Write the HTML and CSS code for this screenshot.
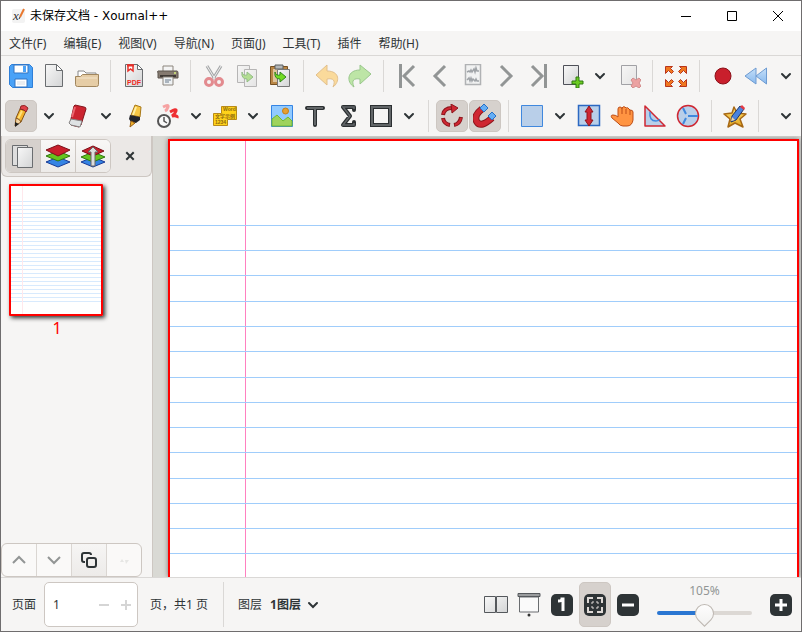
FILE: index.html
```html
<!DOCTYPE html>
<html lang="zh-CN">
<head>
    <meta charset="UTF-8">
    <meta name="viewport" content="width=device-width, initial-scale=1.0">
    <title>未保存文档 - Xournal++</title>
    <link rel="stylesheet" href="styles.css">
</head>
<body>
    <!-- shared shapes -->
    <svg class="defs" aria-hidden="true">
        <defs>
            <linearGradient id="paper" x1="0" y1="0" x2="1" y2="1">
                <stop offset="0" stop-color="#f8f8f8"/><stop offset="1" stop-color="#d3d4d5"/>
            </linearGradient>
            <linearGradient id="gold" x1="0" y1="0" x2="0" y2="1">
                <stop offset="0" stop-color="#ffdf70"/><stop offset="1" stop-color="#e2a51f"/>
            </linearGradient>
            <linearGradient id="blue" x1="0" y1="0" x2="0" y2="1">
                <stop offset="0" stop-color="#c5dff8"/><stop offset="1" stop-color="#88b9ee"/>
            </linearGradient>
        </defs>
        <symbol id="chevron" viewBox="0 0 12 12">
            <path d="M2 4l4 4 4-4" fill="none" stroke="#2e3436" stroke-width="2" stroke-linecap="round"/>
        </symbol>
    </svg>

    <div class="window">
        <header class="titlebar">
            <svg class="app-icon" viewBox="0 0 16 16">
                <rect width="13" height="14" y="1" rx="2" fill="#f3f3f3"/>
                <text x="1" y="12" font-family="Liberation Serif" font-size="13" font-style="italic" fill="#333">x</text>
                <path d="M8 9L12 1" stroke="#e8772e" stroke-width="2"/>
                <path d="M8 9l-1 2" stroke="#333"/>
            </svg>
            <h1 class="title">未保存文档 - Xournal++</h1>
            <button class="win-button" aria-label="最小化"><svg viewBox="0 0 12 12"><path d="M1 6.500h10" stroke="#000"/></svg></button>
            <button class="win-button" aria-label="最大化"><svg viewBox="0 0 12 12"><path d="M1.500 1.500h9v9h-9z" fill="none" stroke="#000"/></svg></button>
            <button class="win-button" aria-label="关闭"><svg viewBox="0 0 12 12"><path d="M1 1l10 10M11 1L1 11" stroke="#000"/></svg></button>
        </header>

        <nav class="menubar">
            <a href="#">文件(F)</a>
            <a href="#">编辑(E)</a>
            <a href="#">视图(V)</a>
            <a href="#">导航(N)</a>
            <a href="#">页面(J)</a>
            <a href="#">工具(T)</a>
            <a href="#">插件</a>
            <a href="#">帮助(H)</a>
        </nav>

        <div class="toolbar">
            <button class="tool" aria-label="保存"><svg viewBox="0 0 24 24">
                <path d="M2.500.5h18l3 3v20h-20l-3-3v-18z" fill="#4aa2f7" stroke="#2f7fd8"/>
                <path d="M5 1h14v8H5z" fill="#fff" stroke="#3274c2"/><path d="M14 2h3v6h-3z" fill="#4aa2f7"/>
                <path d="M6 15h12v8H6z" fill="#fff" stroke="#3274c2"/><path d="M8 18h8M8 20h8" stroke="#d5dbe2"/>
            </svg></button>
            <button class="tool" aria-label="新建"><svg viewBox="0 0 24 24">
                <path d="M3.500.5h11l6 6v16h-17z" fill="url(#paper)" stroke="#6a6d70"/>
                <path d="M14.500.5v6h6z" fill="#fff" stroke="#6a6d70"/>
            </svg></button>
            <button class="tool" aria-label="打开"><svg viewBox="0 0 24 24">
                <path d="M3 11V7h6l2 2h10v5H3z" fill="#fff" stroke="#888"/>
                <path d="M.5 12.500h5l2-2h16v10q0 2-2 2h-19q-2 0-2-2z" fill="#e6cda6" stroke="#a1865d"/>
                <path d="M2 14h20" stroke="#f4e5cc"/>
            </svg></button>
            <span class="sep"></span>
            <button class="tool" aria-label="导出 PDF"><svg viewBox="0 0 24 24">
                <path d="M3.500.5h12l5 5v17h-17z" fill="url(#paper)" stroke="#6a6d70"/>
                <path d="M15.500.5v5h5z" fill="#fff" stroke="#6a6d70"/>
                <path d="M6 1h5v6L8.500 5 6 7z" fill="#fff" stroke="#e8302a" stroke-width="1.500"/>
                <path d="M5 1.500h7" stroke="#e8302a" stroke-width="2"/>
                <text x="5" y="21" font-family="Liberation Sans" font-size="7" font-weight="bold" fill="#f02a24">PDF</text>
            </svg></button>
            <button class="tool" aria-label="打印"><svg viewBox="0 0 24 24">
                <path d="M8 2h10v6H8z" fill="#f4f4f4" stroke="#8c857d"/>
                <path d="M3 7h19q1 0 1 2v5H3V9q-1-2 0-2z" fill="#857a70" stroke="#5d544c"/>
                <path d="M5 12h16" stroke="#403a35" stroke-width="2"/>
                <path d="M8 13h10v8H8z" fill="#eef1f3" stroke="#8c857d"/><path d="M10 16h6M10 18h4" stroke="#68798a"/>
                <circle cx="20" cy="9" r="1" fill="#d5f07a"/>
            </svg></button>
            <span class="sep"></span>
            <button class="tool dim" aria-label="剪切"><svg viewBox="0 0 24 24">
                <path d="M5 2l8 13M19 2l-8 13" stroke="#555a5e" stroke-width="3"/>
                <path d="M5 2l8 13M19 2l-8 13" stroke="#e8e8e8"/>
                <ellipse cx="7" cy="18" rx="3.500" ry="3.500" fill="none" stroke="#d1232d" stroke-width="3"/>
                <ellipse cx="17" cy="18" rx="3.500" ry="3.500" fill="none" stroke="#d1232d" stroke-width="3"/>
            </svg></button>
            <button class="tool dim" aria-label="复制"><svg viewBox="0 0 24 24">
                <path d="M2.500 1.500h12v17h-12z" fill="url(#paper)" stroke="#777"/>
                <path d="M9.500 5.500h12v17h-12z" fill="url(#paper)" stroke="#777"/>
                <path d="M7 8q1 4 5 3V8l6 5-6 5v-3q-6 0-5-7z" fill="#72c832" stroke="#32851c"/>
            </svg></button>
            <button class="tool" aria-label="粘贴"><svg viewBox="0 0 24 24">
                <path d="M2.500 2.500h17v18h-17z" fill="#b98645" stroke="#775123"/>
                <path d="M5 5h11v13H5z" fill="#dfc49c"/>
                <path d="M7 1h8v4H7z" fill="#b4b7b8" stroke="#5b5e60"/>
                <path d="M9.500 5.500h12v17h-12z" fill="url(#paper)" stroke="#777"/>
                <path d="M7 8q1 4 5 3V8l6 5-6 5v-3q-6 0-5-7z" fill="#72dc22" stroke="#32851c"/>
            </svg></button>
            <span class="sep"></span>
            <button class="tool dim" aria-label="撤销"><svg viewBox="0 0 24 24">
                <path d="M1 11L12 1v6c13 0 13 11 6 16 3-7 0-9-6-8v6z" fill="#ffc044" stroke="#cf8b27"/>
            </svg></button>
            <button class="tool dim" aria-label="重做"><svg viewBox="0 0 24 24">
                <path d="M23 10L12 1v5C-1 6-2 18 6 23c-3-7 0-9 6-8v5z" fill="#86d65a" stroke="#3f9a26"/>
            </svg></button>
            <span class="sep"></span>
            <button class="tool nav" aria-label="第一页"><svg viewBox="0 0 24 24"><path d="M5.500 0v24M19 2L9 12l10 10"/></svg></button>
            <button class="tool nav" aria-label="上一页"><svg viewBox="0 0 24 24"><path d="M17 2L7 12l10 10"/></svg></button>
            <button class="tool dim" aria-label="跳转到注释页"><svg viewBox="0 0 24 24">
                <path d="M4.500.5h15v20h-15z" fill="#eef0f2" stroke="#6d7276" stroke-width="1.500"/>
                <path d="M6 8l2-1 1 1 1-2 1 2 2-3 1 3 1-4 1 3h2M6 16l2-2 1 3 1-3 1 3 1-2 2 2 1-2 1 2h2" fill="none" stroke="#4a535c" stroke-width="1.500"/>
            </svg></button>
            <button class="tool nav" aria-label="下一页"><svg viewBox="0 0 24 24"><path d="M7 2l10 10L7 22"/></svg></button>
            <button class="tool nav" aria-label="最后一页"><svg viewBox="0 0 24 24"><path d="M18.500 0v24M5 2l10 10L5 22"/></svg></button>
            <button class="tool" aria-label="添加页面"><svg viewBox="0 0 24 24">
                <path d="M3.500 1.500h15v19h-15z" fill="url(#paper)" stroke="#4e5058"/>
                <path d="M16 13h3v4h4v3h-4v4h-3v-4h-4v-3h4z" fill="#6ccb22" stroke="#2f7a10"/>
            </svg></button>
            <button class="arrow" aria-label="页面类型"><svg><use href="#chevron"/></svg></button>
            <button class="tool dim" aria-label="删除页面"><svg viewBox="0 0 24 24">
                <path d="M4.500 1.500h15v19h-15z" fill="url(#paper)" stroke="#4e5058"/>
                <path d="M14 16l2-2 3 2 3-2 2 2-2 3 2 3-2 2-3-2-3 2-2-2 2-3z" fill="#e35252" stroke="#b12828"/>
            </svg></button>
            <span class="sep"></span>
            <button class="tool" aria-label="全屏"><svg viewBox="0 0 24 24">
                <g fill="#f0781f" stroke="#b8341c">
                    <path id="corner" d="M1.500 2.500h7l-2 2 3 3-2 2-3-3-3 3z"/>
                    <use href="#corner" transform="matrix(-1 0 0 1 24 0)"/>
                    <use href="#corner" transform="matrix(1 0 0 -1 0 25)"/>
                    <use href="#corner" transform="matrix(-1 0 0 -1 24 25)"/>
                </g>
            </svg></button>
            <span class="sep"></span>
            <button class="tool" aria-label="录音"><svg viewBox="0 0 24 24"><circle cx="12" cy="12" r="8" fill="#c91f2c" stroke="#8b1018"/></svg></button>
            <button class="tool" aria-label="后退"><svg viewBox="0 0 24 24">
                <path d="M12 4v16L1 12zM22.500 4v16L12 12z" fill="url(#blue)" stroke="#6e9bd1" stroke-linejoin="round"/>
            </svg></button>
            <button class="arrow overflow" aria-label="更多"><svg><use href="#chevron"/></svg></button>
        </div>

        <div class="toolbar">
            <button class="tool active" aria-label="画笔"><svg viewBox="0 0 24 24">
                <path d="M7 14l4-9 6 2-5 11z" fill="#f5b52c" stroke="#825116"/>
                <path d="M13 7L9 15" stroke="#ffe07a" stroke-width="2"/>
                <path d="M11 5l1-3q4-2 7 2l-2 4q-2-3-6-3z" fill="#e04048" stroke="#8d2424"/>
                <path d="M7 14l-1 8 6-4q-1-3-5-4z" fill="#f3d5a4" stroke="#825116"/><path d="M6 18v5l4-3z" fill="#222"/>
            </svg></button>
            <button class="arrow" aria-label="画笔选项"><svg><use href="#chevron"/></svg></button>
            <button class="tool" aria-label="橡皮擦"><svg viewBox="0 0 24 24">
                <path d="M9 1l9 2q2 0 2 2l-5 16-2 2-8-2-1-2L8 2z" fill="#cc2430" stroke="#82151c"/>
                <path d="M5 15l11 2-2 6-9-2-2-2z" fill="#dfe2e4" stroke="#858585"/>
                <path d="M9 3L6 13" stroke="#ed6670" stroke-width="2"/>
            </svg></button>
            <button class="arrow" aria-label="橡皮擦选项"><svg><use href="#chevron"/></svg></button>
            <button class="tool" aria-label="荧光笔"><svg viewBox="0 0 24 24">
                <path d="M12 1l6 2-1 10-9-2z" fill="#f7c745" stroke="#a87818"/>
                <path d="M13 3l-3 8" stroke="#fff0a5" stroke-width="2"/>
                <path d="M7 11l10 2v3l-4 3-5-1-2-3z" fill="#22242b"/>
                <path d="M8 17l4 2-5 4z" fill="#f5b52c" stroke="#945d16"/>
            </svg></button>
            <button class="tool" aria-label="激光笔"><svg viewBox="0 0 24 24">
                <path d="M7 3q6-3 5 0t-3 4" fill="none" stroke="#f6a2a2" stroke-width="3"/>
                <path d="M14 8q7-4 6-1t-4 5q6-1 5 2" fill="none" stroke="#ee2f32" stroke-width="3"/>
                <circle cx="8" cy="17" r="6" fill="#fafafa" stroke="#555" stroke-width="2"/>
                <path d="M8 13v4l3 2" fill="none" stroke="#555" stroke-width="1.500"/>
            </svg></button>
            <button class="arrow" aria-label="激光笔选项"><svg><use href="#chevron"/></svg></button>
            <button class="tool" aria-label="选择 PDF 文本"><svg viewBox="0 0 24 24">
                <path d="M8.500 2.500h15v13h-9v6h-14v-12h8z" fill="#ffd21a" stroke="#b98b19"/>
                <g font-family="Liberation Sans" font-size="5" font-weight="bold" fill="#8e6910">
                    <text x="10" y="7">Word</text>
                    <text x="2" y="14" font-family="Noto Sans CJK SC">文字示例</text>
                    <text x="2" y="20">1234</text>
                </g>
            </svg></button>
            <button class="arrow" aria-label="文本选项"><svg><use href="#chevron"/></svg></button>
            <button class="tool" aria-label="图片"><svg viewBox="0 0 24 24">
                <path d="M1.500 1.500h21v21h-21z" fill="#91caff" stroke="#3584e4"/>
                <path d="M2 15l5-4 6 6 5-4 4 4v5H2z" fill="#9ed35c" stroke="#72b932"/>
                <circle cx="15.500" cy="7" r="3" fill="#e6a031" stroke="#c77d17"/>
            </svg></button>
            <button class="tool" aria-label="文本"><svg viewBox="0 0 24 24">
                <path d="M4 4h16M12 4v17" fill="none" stroke="#2b2f31" stroke-width="4" stroke-linecap="round"/>
                <path d="M4 4h16M12 4v17" fill="none" stroke="#626668" stroke-width="2"/>
            </svg></button>
            <button class="tool" aria-label="公式"><svg viewBox="0 0 24 24">
                <path d="M18 6V3H7l7 9-7 9h11v-3" fill="none" stroke="#2b2f31" stroke-width="4" stroke-linejoin="round" stroke-linecap="round"/>
                <path d="M18 5V3H7l7 9-7 9h11v-2" fill="none" stroke="#626668" stroke-width="1.500"/>
            </svg></button>
            <button class="tool" aria-label="形状"><svg viewBox="0 0 24 24">
                <path d="M3 3h18v18H3z" fill="#f6f5f4" stroke="#2b2f31" stroke-width="4"/>
                <path d="M3 3h18v18H3z" fill="none" stroke="#626668" stroke-width="2"/>
            </svg></button>
            <button class="arrow" aria-label="形状选项"><svg><use href="#chevron"/></svg></button>
            <span class="sep"></span>
            <button class="tool active" aria-label="旋转吸附"><svg viewBox="0 0 24 24">
                <g fill="none" stroke="#8d151c" stroke-width="4">
                    <path d="M3 11q1-7 9-7M10 21q-6-1-7-7M14 21q6-1 7-8"/>
                    <path d="M3 10q2-6 9-6M9 21q-5-2-6-6M15 21q5-2 6-7" stroke="#cf2732" stroke-width="2"/>
                </g>
                <path d="M11 0l7 4-6 5z" fill="#cf2732" stroke="#8d151c"/>
            </svg></button>
            <button class="tool active" aria-label="网格吸附"><svg viewBox="0 0 24 24">
                <path d="M9 5Q0 12 4 18t15-4" fill="none" stroke="#8d151c" stroke-width="7"/>
                <path d="M9 5Q0 12 4 18t15-4" fill="none" stroke="#cf2732" stroke-width="5"/>
                <path d="M7 4l4-4 4 4-4 4zM15 12l4-4 4 4-4 4z" fill="#65aef5" stroke="#2870c4"/>
            </svg></button>
            <span class="sep"></span>
            <button class="tool" aria-label="选择矩形"><svg viewBox="0 0 24 24"><path d="M1.500 1.500h21v21h-21z" fill="#b9cfe9" stroke="#4088de"/></svg></button>
            <button class="arrow" aria-label="选择选项"><svg><use href="#chevron"/></svg></button>
            <button class="tool" aria-label="垂直间距"><svg viewBox="0 0 24 24">
                <path d="M1.500 1.500h21v20h-21z" fill="#b9cfe9" stroke="#2b68c2" stroke-width="1.500"/>
                <path d="M12 2l4 6h-2v8h2l-4 6-4-6h2V8H8z" fill="#cf2732" stroke="#8d151c"/>
            </svg></button>
            <button class="tool" aria-label="手形工具"><svg viewBox="0 0 24 24">
                <path d="M8 13V5q0-2 2-2t2 2V4q1-2 3-1l1 1q2-1 3 1l1 1q3 0 3 2v8q-1 6-6 6h-4q-3 0-5-3l-6-5q-2-3 1-3t5 2z" fill="#ff9442" stroke="#bd4d16"/>
                <path d="M12 5v5M16 5v5M20 6v5" stroke="#bd4d16"/>
            </svg></button>
            <button class="tool" aria-label="三角板"><svg viewBox="0 0 24 24">
                <path d="M2 2v20h20z" fill="#b9cfe9" stroke="#cf2732" stroke-width="1.500" stroke-linejoin="round"/>
                <path d="M7 8q-1 9 6 9 3 0 4-2" fill="none" stroke="#4088de" stroke-width="1.500"/>
            </svg></button>
            <button class="tool" aria-label="圆规"><svg viewBox="0 0 24 24">
                <circle cx="12" cy="12" r="10.500" fill="#b9cfe9" stroke="#cf2732" stroke-width="1.500"/>
                <path d="M7 4l3 6M7 20l3-6M12 12h10" stroke="#4088de" stroke-width="2"/>
            </svg></button>
            <span class="sep"></span>
            <button class="tool" aria-label="默认工具"><svg viewBox="0 0 24 24">
                <path d="M11 3l3 6 9 1-6 5 3 8-8-4-7 4 2-8-6-5 8-1z" fill="url(#gold)" stroke="#a76814" stroke-width="1.500" stroke-linejoin="round"/>
                <path d="M9 12L17 2l4 3-8 11-5 2z" fill="#4a83dd" stroke="#1f3667"/><path d="M17 3l2-2 3 3-1 2z" fill="#e43a45"/>
                <path d="M9 13l3 3-4 1z" fill="#f3d5a4"/>
            </svg></button>
            <span class="sep"></span>
            <button class="arrow overflow" aria-label="更多"><svg><use href="#chevron"/></svg></button>
        </div>

        <main class="workspace">
            <aside class="sidebar">
                <div class="sidebar-head">
                    <div class="tabs">
                        <button class="tab selected" aria-label="页面预览"><svg viewBox="0 0 24 24">
                            <path d="M1.500 1.500h15v20h-15z" fill="#dedede" stroke="#6a6d70"/>
                            <path d="M6.500 3.500h15v20h-15z" fill="url(#paper)" stroke="#6a6d70"/>
                        </svg></button>
                        <button class="tab" aria-label="图层堆栈"><svg viewBox="0 0 24 24">
                            <path d="M0 18l12-5 12 5-12 5z" fill="#3584e4" stroke="#1a3c96"/>
                            <path d="M0 12l12-5 12 5-12 5z" fill="#65c51e" stroke="#2f7a10"/>
                            <path d="M0 6l12-5 12 5-12 6z" fill="#c91f2c" stroke="#7c1018"/>
                        </svg></button>
                        <button class="tab" aria-label="图层"><svg viewBox="0 0 24 24">
                            <path d="M0 18l12-5 12 5-12 5z" fill="#3584e4" stroke="#1a3c96"/>
                            <path d="M0 13l12-5 12 5-12 5z" fill="#65c51e" stroke="#2f7a10"/>
                            <path d="M1 7l11-5 11 5-11 5z" fill="#c91f2c" stroke="#7c1018"/>
                            <path d="M12 3l5 5h-3v14h-4V8H7z" fill="#ddd" stroke="#666"/>
                        </svg></button>
                    </div>
                    <button class="close" aria-label="关闭侧栏"><svg viewBox="0 0 12 12"><path d="M3 3l6 6M9 3L3 9" stroke="#2e3436" stroke-width="2" stroke-linecap="square"/></svg></button>
                </div>
                <div class="previews">
                    <figure class="preview">
                        <div class="thumb"></div>
                        <figcaption>1</figcaption>
                    </figure>
                </div>
                <div class="page-actions">
                    <button aria-label="上移"><svg viewBox="0 0 16 16"><path d="M2 11l6-6 6 6" stroke="#929595"/></svg></button>
                    <button aria-label="下移"><svg viewBox="0 0 16 16"><path d="M2 5l6 6 6-6" stroke="#929595"/></svg></button>
                    <button class="enabled" aria-label="复制页面"><svg viewBox="0 0 16 16"><path d="M4 10H3q-2 0-2-2V3q0-2 2-2h5q2 0 2 2M8 6h5q2 0 2 2v5q0 2-2 2H8q-2 0-2-2V8q0-2 2-2z" stroke="#2e3436"/></svg></button>
                    <button aria-label="删除页面"><svg viewBox="0 0 16 16"><path d="M4 10l2-3 2 3zM9 8h4l-3 4z" fill="#e6e6e4"/></svg></button>
                </div>
            </aside>

            <section class="canvas">
                <svg class="page">
                    <path class="margin-line" d="M75.500 0v2000"/>
                    <path class="rules" d="M0 84.500h2000M0 109.500h2000M0 134.500h2000M0 160.500h2000M0 185.500h2000M0 210.500h2000M0 236.500h2000M0 261.500h2000M0 286.500h2000M0 311.500h2000M0 337.500h2000M0 362.500h2000M0 387.500h2000M0 412.500h2000"/>
                </svg>
            </section>
        </main>

        <footer class="statusbar">
            <label for="page">页面</label>
            <div class="spin">
                <input id="page" type="text" value="1">
                <button aria-label="减少"><svg viewBox="0 0 12 12"><path d="M1 6h10"/></svg></button>
                <button aria-label="增加"><svg viewBox="0 0 12 12"><path d="M1 6h10M6 1v10"/></svg></button>
            </div>
            <span class="count">页，共1 页</span>
            <span class="divider"></span>
            <span class="layer-label">图层</span>
            <button class="layer">1图层 <svg><use href="#chevron"/></svg></button>

            <div class="zoom">
                <button class="tool" aria-label="双页"><svg viewBox="0 0 24 24">
                    <path d="M.5 3.500h11v16H.5zM12.500 3.500h11v16h-11z" fill="url(#paper)" stroke="#55585c"/>
                </svg></button>
                <button class="tool" aria-label="演示模式"><svg viewBox="0 0 24 24">
                    <path d="M2.500 4h19v15h-19z" fill="#fafafa" stroke="#6a6d70"/>
                    <path d="M1 .5h22v3H1z" fill="#9a9c9e" stroke="#55585c"/><circle cx="12" cy="22" r="1.500" fill="#333"/>
                </svg></button>
                <button class="tool" aria-label="原始大小"><svg viewBox="0 0 24 24">
                    <rect x="1" y="1" width="22" height="22" rx="5" fill="#2e3436"/>
                    <path d="M8 8q4 0 4-2h1v12" fill="none" stroke="#fff" stroke-width="3"/>
                </svg></button>
                <button class="tool active" aria-label="适应宽度"><svg viewBox="0 0 24 24">
                    <rect x="1" y="1" width="22" height="22" rx="5" fill="#2e3436"/>
                    <path d="M5 10V5h5M14 5h5v5M19 14v5h-5M10 19H5v-5" fill="none" stroke="#ded9d6" stroke-width="2"/>
                    <path d="M8 10h2V8M14 8v2h2M16 14h-2v2M10 16v-2H8" fill="none" stroke="#ded9d6"/>
                </svg></button>
                <button class="tool" aria-label="缩小"><svg viewBox="0 0 24 24">
                    <rect x="1" y="1" width="22" height="22" rx="5" fill="#2e3436"/><path d="M6 12h12" stroke="#fff" stroke-width="3"/>
                </svg></button>
                <div class="slider">
                    <label for="zoom">105%</label>
                    <input id="zoom" type="range" min="0" max="100" value="50">
                </div>
                <button class="tool" aria-label="放大"><svg viewBox="0 0 24 24">
                    <rect x="1" y="1" width="22" height="22" rx="5" fill="#2e3436"/><path d="M6 12h12M12 6v12" stroke="#fff" stroke-width="3"/>
                </svg></button>
            </div>
        </footer>
    </div>
</body>
</html>
```
FILE: styles.css
```css
* {
    box-sizing: border-box;
}

body {
    margin: 0;
    font-family: "Noto Sans", "Noto Sans CJK SC", sans-serif;
    font-size: 12px;
    line-height: 16px;
    color: #2e3436;
    background: #f6f5f4;
}

button {
    padding: 0;
    border: 0;
    background: none;
    font: inherit;
    color: inherit;
}

svg {
    display: block;
}

.defs {
    position: absolute;
    width: 0;
    height: 0;
}

.window {
    display: flex;
    flex-direction: column;
    height: 100vh;
    border: 1px solid #6f6d6e;
    overflow: hidden;
}

/* title bar */
.titlebar {
    display: flex;
    align-items: center;
    height: 30px;
    padding-left: 11px;
    background: #fff;
    color: #000;
}

.app-icon {
    width: 16px;
    height: 16px;
}

.title {
    flex: 1;
    margin: 0 0 0 2px;
    font-size: 12px;
    font-weight: normal;
    font-family: "DejaVu Sans", "Noto Sans CJK SC", sans-serif;
}

.win-button {
    display: flex;
    align-items: center;
    justify-content: center;
    width: 46px;
    height: 30px;
}

.win-button svg {
    width: 12px;
    height: 12px;
}

/* menu */
.menubar {
    display: flex;
    gap: 1px;
    height: 25px;
    border-bottom: 1px solid #dad8d6;
}

.menubar a {
    padding: 5px 8px 3px;
    color: inherit;
    text-decoration: none;
}

/* toolbars */
.toolbar {
    display: flex;
    gap: 1px;
    height: 40px;
    padding: 4px;
}

.tool {
    display: flex;
    align-items: center;
    justify-content: center;
    flex: none;
    width: 32px;
    border-radius: 5px;
}

.tool svg {
    width: 24px;
    height: 24px;
}

.tool.active {
    background: #d6d1cd;
    border: 1px solid #cdc7c2;
}

.dim svg {
    opacity: 0.5;
}

.nav svg {
    fill: none;
    stroke: #929595;
    stroke-width: 3;
}

.sep {
    flex: none;
    width: 1px;
    margin: 0 6px;
    background: #dad8d6;
}

.arrow {
    display: flex;
    align-items: center;
    justify-content: center;
    flex: none;
    width: 23px;
    padding-right: 2px;
}

.arrow svg {
    width: 12px;
    height: 12px;
}

.overflow {
    margin-left: auto;
    padding: 0;
}

/* workspace */
.workspace {
    display: flex;
    flex: 1;
    min-height: 0;
}

.sidebar {
    display: flex;
    flex-direction: column;
    width: 152px;
    border-right: 1px solid #cdc7c2;
}

.sidebar-head {
    display: flex;
    align-items: center;
    gap: 7px;
    height: 41px;
    padding: 0 3px;
    background: #ebe8e6;
    border: 1px solid #cdc7c2;
    border-top: 0;
    border-radius: 0 0 6px 6px;
}

.tabs {
    display: flex;
    height: 34px;
    border: 1px solid #cdc7c2;
    border-radius: 6px;
    background: #f6f5f4;
    overflow: hidden;
}

.tab {
    display: flex;
    align-items: center;
    justify-content: center;
    width: 35px;
    background: linear-gradient(#f8f7f6, #edebe9);
    border-left: 1px solid #cdc7c2;
}

.tab:first-child {
    width: 34px;
    border-left: 0;
}

.tab.selected {
    background: #d6d1cd;
}

.tab svg {
    width: 24px;
    height: 24px;
}

.close {
    display: flex;
    align-items: center;
    justify-content: center;
    width: 24px;
    height: 24px;
}

.close svg {
    width: 12px;
    height: 12px;
}

.previews {
    flex: 1;
    padding: 7px 8px;
}

.preview {
    width: 94px;
    margin: 0;
}

.thumb {
    height: 132px;
    border: 2px solid #f00;
    border-radius: 1px;
    box-shadow: 2px 2px 4px #333;
    background:
        linear-gradient(#ffe8ec, #ffe8ec) 11px 0 / 1px 100% no-repeat,
        linear-gradient(#fff, #fff) 0 0 / 100% 12px no-repeat,
        linear-gradient(#fff, #fff) 0 100% / 100% 10px no-repeat,
        repeating-linear-gradient(#fff 0 3px, #d8eafd 3px 4px);
}

.preview figcaption {
    padding: 2px 0 0 2px;
    color: #f00;
    font-size: 16px;
    line-height: 20px;
    text-align: center;
}

.page-actions {
    display: flex;
    width: 141px;
    height: 34px;
    border: 1px solid #cdc7c2;
    border-radius: 6px;
    background: #faf9f8;
    overflow: hidden;
}

.page-actions button {
    display: flex;
    align-items: center;
    justify-content: center;
    flex: 1;
    border-left: 1px solid #dad6d2;
}

.page-actions button:first-child {
    border-left: 0;
}

.page-actions .enabled {
    background: linear-gradient(#f6f5f4, #edebe9);
}

.page-actions svg {
    width: 16px;
    height: 16px;
    fill: none;
    stroke-width: 2;
}

.canvas {
    flex: 1;
    min-width: 0;
    padding: 3px 2px 0 15px;
    background: #d9d9d4;
    overflow: hidden;
}

.page {
    width: 100%;
    height: 100%;
    background: #fff;
    border: 2px solid #f00;
    border-bottom: 0;
    box-shadow: 0 0 5px #777;
}

.rules {
    fill: none;
    stroke: #a0cdfb;
}

.margin-line {
    fill: none;
    stroke: #ff80c0;
}

/* status bar */
.statusbar {
    display: flex;
    align-items: center;
    height: 54px;
    padding: 4px;
    border-top: 1px solid #dad8d6;
}

.statusbar > label {
    padding: 0 8px 0 7px;
}

.spin {
    display: flex;
    align-items: center;
    width: 94px;
    height: 45px;
    padding: 0 0 0 8px;
    background: #fff;
    border: 1px solid #cdc7c2;
    border-radius: 5px;
}

.spin input {
    flex: 1;
    min-width: 0;
    padding: 0;
    border: 0;
    font: inherit;
    color: inherit;
    outline: 0;
}

.spin button {
    padding: 5px;
}

.spin button svg {
    width: 12px;
    height: 12px;
    stroke: #d5d5d5;
    stroke-width: 2;
}

.count {
    padding: 0 15px 0 12px;
}

.divider {
    width: 1px;
    height: 45px;
    margin-right: 14px;
    background: #dad8d6;
}

.layer {
    display: flex;
    align-items: center;
    gap: 6px;
    margin-left: 8px;
    font-weight: bold;
}

.layer svg {
    width: 12px;
    height: 12px;
}

.zoom {
    display: flex;
    align-items: center;
    gap: 1px;
    margin-left: auto;
}

.zoom .tool {
    height: 45px;
}

.slider {
    display: flex;
    flex-direction: column;
    width: 95px;
    margin: 0 12px;
    color: #929595;
    text-align: center;
}

.slider input {
    appearance: none;
    width: 100%;
    height: 28px;
    margin: 0;
    background: none;
}

.slider input::-webkit-slider-runnable-track {
    height: 4px;
    border-radius: 2px;
    background: linear-gradient(90deg, #2a76d2 50%, #dcd8d4 50%);
}

.slider input::-webkit-slider-thumb {
    appearance: none;
    width: 19px;
    height: 19px;
    margin-top: -7px;
    border: 1px solid #bdb7b1;
    border-radius: 50% 50% 0 50%;
    background: linear-gradient(135deg, #fff, #f2f1f0);
    transform: rotate(45deg);
}
```
